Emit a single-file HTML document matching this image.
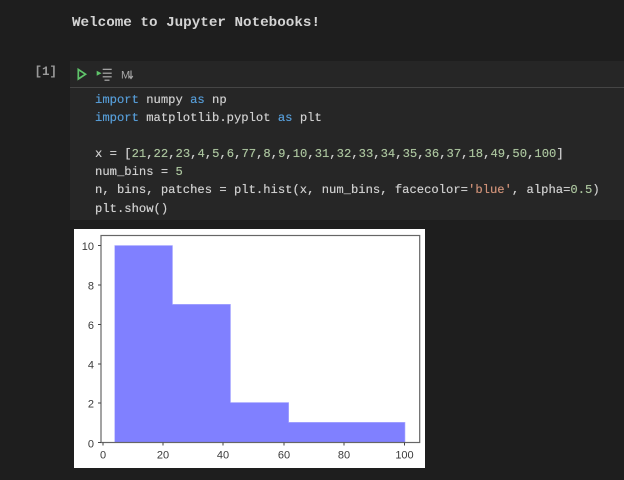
<!DOCTYPE html>
<html>
<head>
<meta charset="utf-8">
<style>
html,body{margin:0;padding:0;background:#1e1e1e;}
body{width:624px;height:480px;position:relative;overflow:hidden;font-family:"Liberation Mono",monospace;}
.h{position:absolute;left:72px;top:14px;font-size:14.25px;font-weight:bold;color:#d4d4d4;line-height:18px;white-space:pre;filter:blur(0.3px);}
.n{position:absolute;left:34.500px;top:64px;font-size:12.5px;font-weight:bold;color:#9a9a9a;line-height:16px;white-space:pre;filter:blur(0.3px);}
.cell{position:absolute;left:70px;top:61px;width:554px;height:159px;background:#262626;}
.sep{position:absolute;left:70px;top:86.500px;width:554px;height:1.500px;background:#454545;}
pre{position:absolute;left:95px;top:91px;margin:0;font-family:"Liberation Mono",monospace;font-size:12.2px;line-height:18.1px;color:#cfcfcf;filter:blur(0.25px);text-shadow:0 0 0.4px currentColor;}
.k{color:#569cd6}.d{color:#a9c29c}.s{color:#ce9178}
</style>
</head>
<body>
<div class="h">Welcome to Jupyter Notebooks!</div>
<div class="n">[1]</div>
<div class="cell"></div>
<div class="sep"></div>
<svg style="position:absolute;left:0;top:0" width="624" height="100">
<path d="M78.3 69.5 L78.3 79 L85.500 74.200 Z" fill="none" stroke="#5fc46a" stroke-width="1.7"/>
<path d="M96.700 70.700 L96.700 75.700 L101.500 73.200 Z" fill="#5fc46a"/>
<path d="M102.700 69.300h9M102.700 73.200h9M102.700 76.800h9M104.500 80.200h5" stroke="#b4b4b4" stroke-width="1.100" fill="none"/>
<text x="121" y="78.500" font-family="Liberation Sans" font-size="11" fill="#a8a8a8">M</text>
<path d="M131 70.500v8M129.200 76l1.800 2.500l1.800-2.500" stroke="#a8a8a8" stroke-width="1.100" fill="none"/>
</svg>
<pre><span class="k">import</span> numpy <span class="k">as</span> np
<span class="k">import</span> matplotlib.pyplot <span class="k">as</span> plt

x = [<span class="d">21</span>,<span class="d">22</span>,<span class="d">23</span>,<span class="d">4</span>,<span class="d">5</span>,<span class="d">6</span>,<span class="d">77</span>,<span class="d">8</span>,<span class="d">9</span>,<span class="d">10</span>,<span class="d">31</span>,<span class="d">32</span>,<span class="d">33</span>,<span class="d">34</span>,<span class="d">35</span>,<span class="d">36</span>,<span class="d">37</span>,<span class="d">18</span>,<span class="d">49</span>,<span class="d">50</span>,<span class="d">100</span>]
num_bins = <span class="d">5</span>
n, bins, patches = plt.hist(x, num_bins, facecolor=<span class="s">'blue'</span>, alpha=<span class="d">0.5</span>)
plt.show()</pre>
<svg style="position:absolute;left:74px;top:229px" width="351" height="239" viewBox="74 229 351 239">
<rect x="74" y="229" width="351" height="239" fill="#fff"/>
<path d="M114.700 442.500V245.500H172.500V304.300H230.500V402.500H288.700V422.300H405V442.500Z" fill="#8080ff" stroke="#b0b0ff" stroke-width="0.6"/>
<rect x="101" y="235.500" width="318.700" height="207" fill="none" stroke="#666" stroke-width="1.200"/>
<path d="M98 245.500h3M98 285h3M98 324.500h3M98 364h3M98 403h3M98 442.500h3M103 442.500v3M163 442.500v3M223 442.500v3M284 442.500v3M344 442.500v3M404.500 442.500v3" stroke="#444" stroke-width="1" fill="none"/>
<g font-family="Liberation Sans" font-size="11" fill="#3a3a3a" text-anchor="end" style="filter:blur(0.25px)">
<text x="94" y="250">10</text><text x="94" y="289.500">8</text><text x="94" y="329">6</text><text x="94" y="368.500">4</text><text x="94" y="407.500">2</text><text x="94" y="447.500">0</text>
</g>
<g font-family="Liberation Sans" font-size="11" fill="#3a3a3a" text-anchor="middle" style="filter:blur(0.25px)">
<text x="103" y="458.500">0</text><text x="163" y="458.500">20</text><text x="223" y="458.500">40</text><text x="284" y="458.500">60</text><text x="344" y="458.500">80</text><text x="404.500" y="458.500">100</text>
</g>
</svg>
</body>
</html>
